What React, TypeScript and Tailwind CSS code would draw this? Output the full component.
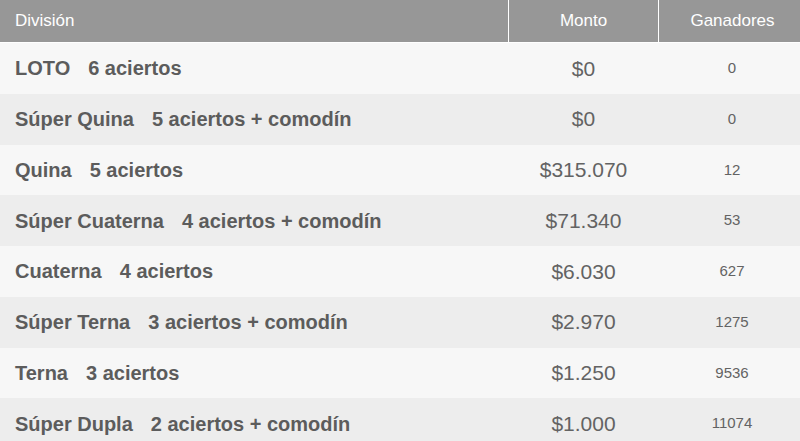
import React from "react";

const rows = [
  { name: "LOTO", desc: "6 aciertos", monto: "$0", gan: "0" },
  { name: "Súper Quina", desc: "5 aciertos + comodín", monto: "$0", gan: "0" },
  { name: "Quina", desc: "5 aciertos", monto: "$315.070", gan: "12" },
  { name: "Súper Cuaterna", desc: "4 aciertos + comodín", monto: "$71.340", gan: "53" },
  { name: "Cuaterna", desc: "4 aciertos", monto: "$6.030", gan: "627" },
  { name: "Súper Terna", desc: "3 aciertos + comodín", monto: "$2.970", gan: "1275" },
  { name: "Terna", desc: "3 aciertos", monto: "$1.250", gan: "9536" },
  { name: "Súper Dupla", desc: "2 aciertos + comodín", monto: "$1.000", gan: "11074" },
];

export default function App() {
  return (
    <div
      className="w-[800px] h-[441px] overflow-hidden bg-white"
      style={{ fontFamily: '"Liberation Sans", Arial, sans-serif' }}
    >
      <div className="grid grid-cols-[508px_150px_142px] h-[42px] bg-[#979797] text-white text-[17px] border-b border-white box-content">
        <div className="flex items-center pl-[15px]">División</div>
        <div className="flex items-center justify-center border-l border-white">Monto</div>
        <div className="flex items-center justify-center border-l border-white pl-[6px]">Ganadores</div>
      </div>
      {rows.map((r, i) => (
        <div
          key={i}
          className={`grid grid-cols-[508px_150px_142px] h-[50.75px] ${i % 2 === 0 ? "bg-[#f7f7f7]" : "bg-[#ededed]"}`}
        >
          <div className="flex items-center pl-[15px] text-[20px] font-bold text-[#5c5c5c] whitespace-nowrap">
            <span>{r.name}</span>
            <span className="ml-[18px]">{r.desc}</span>
          </div>
          <div className="flex items-center justify-center pl-[1px] text-[21px] text-[#636363]">{r.monto}</div>
          <div className="flex items-center justify-center pl-[6px] text-[15px] text-[#636363]">{r.gan}</div>
        </div>
      ))}
    </div>
  );
}
